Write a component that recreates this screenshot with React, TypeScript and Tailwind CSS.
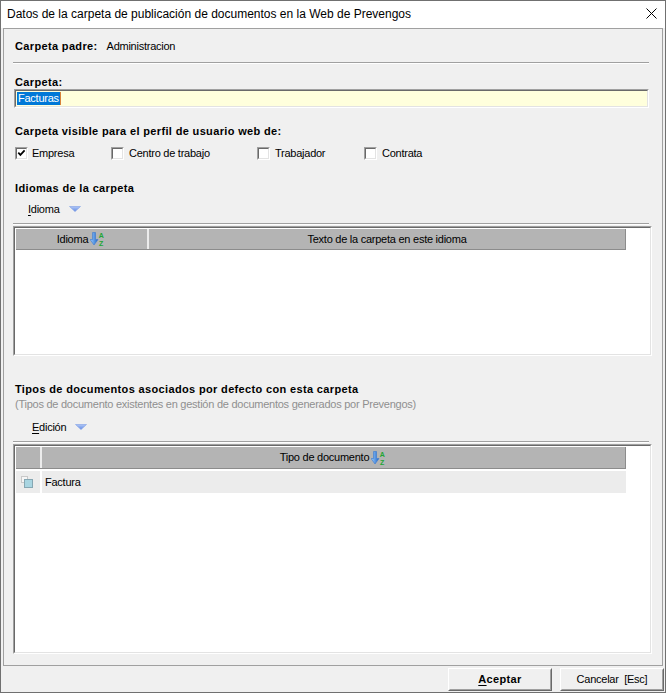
import React from "react";

function SortIcon() {
  return (
    <svg width="16" height="16" viewBox="0 0 16 16" className="ml-[2px] shrink-0">
      <defs>
        <linearGradient id="sortg" x1="0" y1="0" x2="1" y2="0">
          <stop offset="0" stopColor="#9fd0ff" />
          <stop offset="1" stopColor="#1d64c8" />
        </linearGradient>
      </defs>
      <path d="M2.5 1.5H5.5V8.5H8L4 14L0 8.5H2.5Z" fill="url(#sortg)" stroke="#3a78d0" strokeWidth="0.6" />
      <text x="8.8" y="6.8" fontSize="7" fontWeight="bold" fill="#1fa534" fontFamily="Liberation Sans, Arial, sans-serif">A</text>
      <text x="9" y="14.6" fontSize="7" fontWeight="bold" fill="#1fa534" fontFamily="Liberation Sans, Arial, sans-serif">Z</text>
    </svg>
  );
}

function Tri({ className }: { className: string }) {
  return (
    <svg width="12" height="6" viewBox="0 0 12 6" className={className}>
      <defs>
        <linearGradient id="trig" x1="0" y1="0" x2="0" y2="1">
          <stop offset="0" stopColor="#b3c9f6" />
          <stop offset="1" stopColor="#5e88e4" />
        </linearGradient>
      </defs>
      <path d="M0.5 0.5H11.5L6 5.6Z" fill="url(#trig)" stroke="#7d9de6" strokeWidth="0.6" />
    </svg>
  );
}

function Box({ checked }: { checked?: boolean }) {
  return (
    <div className="w-[13px] h-[13px] shrink-0 border border-t-[#a0a0a0] border-l-[#a0a0a0] border-r-white border-b-white">
      <div className="w-full h-full border border-t-[#696969] border-l-[#696969] border-r-[#e3e3e3] border-b-[#e3e3e3] bg-white">
        {checked ? (
          <svg width="9" height="9" viewBox="0 0 9 9">
            <polyline points="1.3,3.6 3.4,5.9 7.6,1.4" fill="none" stroke="#000" strokeWidth="1.7" />
          </svg>
        ) : null}
      </div>
    </div>
  );
}

function Sep() {
  return <div className="w-[636px] h-[2px] border-t border-t-[#a0a0a0] border-b border-b-white" />;
}

function Btn({ children }: { children: React.ReactNode }) {
  return (
    <div className="w-[104px] h-[23px] border border-t-white border-l-white border-r-[#696969] border-b-[#696969]">
      <div className="w-full h-full border border-t-[#f0f0f0] border-l-[#f0f0f0] border-r-[#a0a0a0] border-b-[#a0a0a0] flex items-center justify-center text-[11px]">
        {children}
      </div>
    </div>
  );
}

export default function App() {
  return (
    <div className="w-[666px] h-[693px] border border-[#707070] bg-[#f0f0f0] flex flex-col font-['Liberation_Sans',Arial,sans-serif] text-black overflow-hidden">
      <div className="h-[27px] shrink-0 bg-white flex items-center justify-between pl-[6px] pr-[8px] pb-[2px]">
        <span className="text-[12px] leading-none whitespace-nowrap">
          Datos de la carpeta de publicación de documentos en la Web de Prevengos
        </span>
        <svg width="11" height="11" viewBox="0 0 11 11">
          <path d="M0.5 0.5L10.5 10.5M10.5 0.5L0.5 10.5" stroke="#000" strokeWidth="1" />
        </svg>
      </div>

      <div className="ml-[2px] w-[660px] h-[638px] shrink-0 border border-[#a0a0a0] flex flex-col pl-[9px] text-[11px] tracking-[-0.25px] whitespace-nowrap">
        <div className="mt-[7px] h-[20px] flex items-center pl-[2px]">
          <span className="font-bold tracking-[0.35px]">Carpeta padre:</span>
          <span className="ml-[9px]">Administracion</span>
        </div>
        <div className="mt-[6px]">
          <Sep />
        </div>
        <div className="mt-[11px] h-[14px] leading-[14px] pl-[2px] font-bold tracking-[0.35px]">Carpeta:</div>
        <div className="ml-[1px] w-[635px] h-[19px] border border-t-[#a0a0a0] border-l-[#a0a0a0] border-r-white border-b-white">
          <div className="h-full border border-t-[#696969] border-l-[#696969] border-r-[#e3e3e3] border-b-[#e3e3e3] bg-[#ffffdc] flex items-center pl-[1px]">
            <span className="bg-[#0078d7] text-white leading-[13px] px-[1px]">Facturas</span>
            <span className="w-[1px] h-[13px] bg-[#d8823a]" />
          </div>
        </div>
        <div className="mt-[16px] h-[14px] leading-[14px] pl-[2px] font-bold tracking-[0.35px]">
          Carpeta visible para el perfil de usuario web de:
        </div>
        <div className="mt-[8px] h-[14px] flex items-center pl-[2px]">
          <div className="w-[96px] flex items-center">
            <Box checked />
            <span className="ml-[4px] leading-[14px]">Empresa</span>
          </div>
          <div className="w-[146px] flex items-center">
            <Box />
            <span className="ml-[5px] leading-[14px]">Centro de trabajo</span>
          </div>
          <div className="w-[107px] flex items-center">
            <Box />
            <span className="ml-[5px] leading-[14px]">Trabajador</span>
          </div>
          <div className="flex items-center">
            <Box />
            <span className="ml-[5px] leading-[14px]">Contrata</span>
          </div>
        </div>
        <div className="mt-[21px] h-[14px] leading-[14px] pl-[2px] font-bold tracking-[0.35px]">Idiomas de la carpeta</div>
        <div className="mt-[7px] h-[14px] flex items-center pl-[15px]">
          <span className="leading-[14px]">
            <span className="underline underline-offset-[2px]">I</span>dioma
          </span>
          <Tri className="ml-[9px]" />
        </div>
        <div className="mt-[7px]">
          <Sep />
        </div>
        <div className="mt-[1px] w-[639px] h-[130px] border border-t-[#a0a0a0] border-l-[#a0a0a0] border-r-white border-b-white">
          <div className="h-full border border-t-[#696969] border-l-[#696969] border-r-[#e3e3e3] border-b-[#e3e3e3] bg-white pt-[1px] pl-[1px]">
            <div className="flex h-[21px] w-[610px] bg-[#b4b4b4] border-b border-[#8c8c8c]">
              <div className="w-[133px] border-r-2 border-[#ececec] flex items-center justify-center">
                <span>Idioma</span>
                <SortIcon />
              </div>
              <div className="w-[477px] border-r border-[#8c8c8c] flex items-center justify-center">
                Texto de la carpeta en este idioma
              </div>
            </div>
          </div>
        </div>
        <div className="mt-[26px] h-[14px] leading-[14px] pl-[2px] font-bold tracking-[0.35px]">
          Tipos de documentos asociados por defecto con esta carpeta
        </div>
        <div className="mt-[1px] h-[14px] leading-[14px] pl-[2px] text-[#8f8f8f]">
          (Tipos de documento existentes en gestión de documentos generados por Prevengos)
        </div>
        <div className="mt-[9px] h-[14px] flex items-center pl-[19px]">
          <span className="leading-[14px]">
            <span className="underline underline-offset-[2px]">E</span>dición
          </span>
          <Tri className="ml-[9px]" />
        </div>
        <div className="mt-[7px]">
          <Sep />
        </div>
        <div className="mt-[1px] w-[639px] h-[210px] border border-t-[#a0a0a0] border-l-[#a0a0a0] border-r-white border-b-white">
          <div className="h-full border border-t-[#696969] border-l-[#696969] border-r-[#e3e3e3] border-b-[#e3e3e3] bg-white pt-[1px] pl-[1px]">
            <div className="flex h-[22px] w-[610px] bg-[#b4b4b4] border-b border-[#8c8c8c]">
              <div className="w-[26px] border-r-2 border-[#ececec]" />
              <div className="w-[584px] border-r border-[#8c8c8c] flex items-center justify-center">
                <span>Tipo de documento</span>
                <SortIcon />
              </div>
            </div>
            <div className="mt-[2px] flex h-[22px] w-[610px]">
              <div className="w-[24px] bg-[#ececec] flex items-center pl-[5px]">
                <svg width="12" height="12" viewBox="0 0 12 12">
                  <rect x="0.5" y="0.5" width="6" height="6" fill="#f6f6f6" stroke="#c9c9c9" />
                  <rect x="3.5" y="3.5" width="8" height="8" fill="#a9d5e1" stroke="#86a7b3" />
                </svg>
              </div>
              <div className="ml-[2px] w-[584px] bg-[#ececec] flex items-center pl-[3px]">Factura</div>
            </div>
          </div>
        </div>
      </div>

      <div className="flex-1 flex justify-end gap-[8px] pt-[2px] pr-[1px] tracking-[-0.25px]">
        <Btn>
          <span className="font-bold tracking-[0.35px]">
            <span className="underline underline-offset-[2px]">A</span>ceptar
          </span>
        </Btn>
        <Btn>
          <span className="whitespace-pre">Cancelar  [Esc]</span>
        </Btn>
      </div>
    </div>
  );
}
